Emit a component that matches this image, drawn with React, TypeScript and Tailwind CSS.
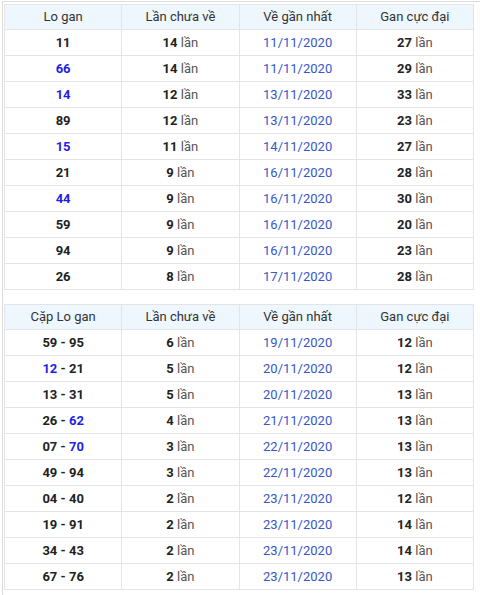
const loGan = [
  { n: "11", blue: false, miss: 14, date: "11/11/2020", max: 27 },
  { n: "66", blue: true, miss: 14, date: "11/11/2020", max: 29 },
  { n: "14", blue: true, miss: 12, date: "13/11/2020", max: 33 },
  { n: "89", blue: false, miss: 12, date: "13/11/2020", max: 23 },
  { n: "15", blue: true, miss: 11, date: "14/11/2020", max: 27 },
  { n: "21", blue: false, miss: 9, date: "16/11/2020", max: 28 },
  { n: "44", blue: true, miss: 9, date: "16/11/2020", max: 30 },
  { n: "59", blue: false, miss: 9, date: "16/11/2020", max: 20 },
  { n: "94", blue: false, miss: 9, date: "16/11/2020", max: 23 },
  { n: "26", blue: false, miss: 8, date: "17/11/2020", max: 28 },
];

// a, b: [value, isBlue]
const capGan: { a: [string, boolean]; b: [string, boolean]; miss: number; date: string; max: number }[] = [
  { a: ["59", false], b: ["95", false], miss: 6, date: "19/11/2020", max: 12 },
  { a: ["12", true], b: ["21", false], miss: 5, date: "20/11/2020", max: 12 },
  { a: ["13", false], b: ["31", false], miss: 5, date: "20/11/2020", max: 13 },
  { a: ["26", false], b: ["62", true], miss: 4, date: "21/11/2020", max: 13 },
  { a: ["07", false], b: ["70", true], miss: 3, date: "22/11/2020", max: 13 },
  { a: ["49", false], b: ["94", false], miss: 3, date: "22/11/2020", max: 13 },
  { a: ["04", false], b: ["40", false], miss: 2, date: "23/11/2020", max: 12 },
  { a: ["19", false], b: ["91", false], miss: 2, date: "23/11/2020", max: 14 },
  { a: ["34", false], b: ["43", false], miss: 2, date: "23/11/2020", max: 14 },
  { a: ["67", false], b: ["76", false], miss: 2, date: "23/11/2020", max: 13 },
];

const th = "border border-[#e4e4e4] h-[25px] font-normal text-[13px] text-[#333]";
const td = "border border-[#e4e4e4] h-[26px] text-[13px] text-center";

const Lan = ({ v }: { v: number }) => (
  <>
    <b className="text-[#222]">{v}</b> <span className="text-[#555]">lần</span>
  </>
);

const Num = ({ v, blue }: { v: string; blue: boolean }) => (
  <span className={blue ? "text-[#1f1fe8]" : "text-[#222]"}>{v}</span>
);

const Head = ({ first }: { first: string }) => (
  <thead>
    <tr className="bg-[#eef6fe]">
      <th className={th}>{first}</th>
      <th className={th}>Lần chưa về</th>
      <th className={th}>Về gần nhất</th>
      <th className={th}>Gan cực đại</th>
    </tr>
  </thead>
);

export default function App() {
  return (
    <div
      className="w-[480px] h-[595px] overflow-hidden bg-white border-l border-t border-[#dcdcdc] ml-[2px] mt-[1px] pl-[1px] pt-[2px]"
      style={{ fontFamily: "Roboto, 'Liberation Sans', sans-serif" }}
    >
      <table className="w-[470px] border-collapse table-fixed">
        <Head first="Lo gan" />
        <tbody>
          {loGan.map((r) => (
            <tr key={r.n}>
              <td className={td + " font-bold"}>
                <Num v={r.n} blue={r.blue} />
              </td>
              <td className={td}>
                <Lan v={r.miss} />
              </td>
              <td className={td + " text-[#3657c6]"}>{r.date}</td>
              <td className={td}>
                <Lan v={r.max} />
              </td>
            </tr>
          ))}
        </tbody>
      </table>

      <table className="w-[470px] border-collapse table-fixed mt-[14px]">
        <Head first="Cặp Lo gan" />
        <tbody>
          {capGan.map((r) => (
            <tr key={r.a[0] + r.b[0]}>
              <td className={td + " font-bold"}>
                <Num v={r.a[0]} blue={r.a[1]} /> <span className="text-[#222]">-</span>{" "}
                <Num v={r.b[0]} blue={r.b[1]} />
              </td>
              <td className={td}>
                <Lan v={r.miss} />
              </td>
              <td className={td + " text-[#3657c6]"}>{r.date}</td>
              <td className={td}>
                <Lan v={r.max} />
              </td>
            </tr>
          ))}
        </tbody>
      </table>
    </div>
  );
}
